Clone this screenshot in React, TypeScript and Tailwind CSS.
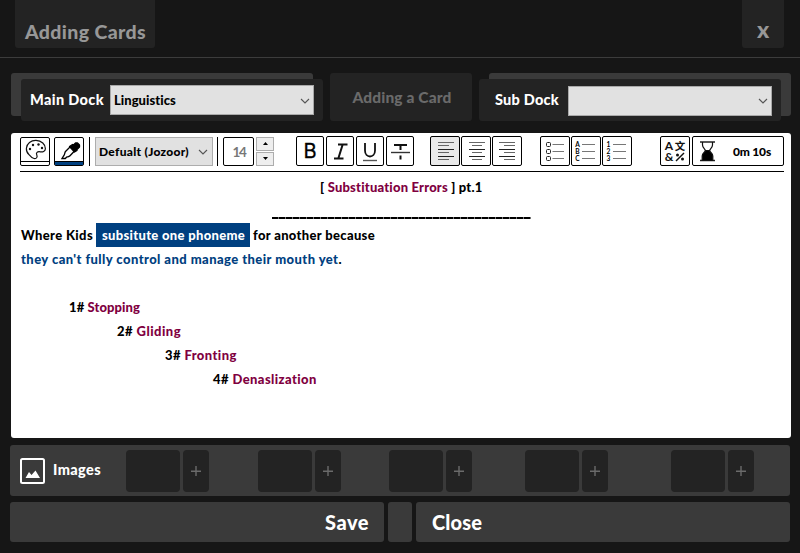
import { useLayoutEffect, useRef, type ReactNode } from "react";

/** Text run tracked so that it spans exactly `w` pixels. */
function Fit({ w, className = "", children }: { w: number; className?: string; children: ReactNode }) {
  const ref = useRef<HTMLSpanElement>(null);
  useLayoutEffect(() => {
    const el = ref.current;
    if (!el) return;
    el.style.letterSpacing = "0px";
    const n = (el.textContent ?? "").length;
    const natural = el.getBoundingClientRect().width;
    el.style.letterSpacing = `${(w - natural) / n}px`;
  }, [w]);
  return (
    <span ref={ref} className={`inline-block shrink-0 whitespace-pre ${className}`}>
      {children}
    </span>
  );
}

function Chevron() {
  return (
    <svg width="10" height="6" viewBox="0 0 10 6" fill="none" stroke="#555" strokeWidth="1.1">
      <path d="M1 1l4 4 4-4" />
    </svg>
  );
}

function Tool({ className = "", children }: { className?: string; children?: ReactNode }) {
  return (
    <button className={`flex h-[30px] shrink-0 items-center justify-center rounded-[2px] border border-black ${className}`}>
      {children}
    </button>
  );
}

function Align({ xs }: { xs: number[][] }) {
  return (
    <svg width="28" height="28" viewBox="0 0 28 28" strokeWidth="1">
      {xs.map(([a, b], i) => (
        <path key={i} d={`M${a} ${[5.5, 8.5, 12.5, 15.5, 19.5, 22.5][i]}H${b}`} stroke={i % 2 || i === 0 ? "#666" : "#222"} />
      ))}
    </svg>
  );
}

function Listing({ marks }: { marks: string[] }) {
  return (
    <svg width="28" height="28" viewBox="0 0 28 28">
      {[7, 14, 21].map((y, i) => (
        <g key={i}>
          {marks.length ? (
            <text x="5.5" y={y + 2.5} textAnchor="middle" className="font-['Lato'] text-[6.6px] leading-none font-bold">
              {marks[i]}
            </text>
          ) : (
            <rect x="5.5" y={y - 1.5} width="4" height="4" rx="1" fill="none" stroke="#222" />
          )}
          <path d={`M${marks.length ? 10 : 11.5} ${y + 0.5}H23`} stroke="#777" />
        </g>
      ))}
    </svg>
  );
}

function Slot({ className = "" }: { className?: string }) {
  return (
    <div className={`flex h-[42px] shrink-0 gap-[3px] ${className}`}>
      <div className="w-[54px] rounded-[4px] bg-[#232323]" />
      <button className="flex w-[26px] items-center justify-center rounded-[4px] bg-[#232323]">
        <svg width="10" height="10" viewBox="0 0 10 10" stroke="#6b6b6b" strokeWidth="1.4">
          <path d="M0 5.2h10M5 0v10" />
        </svg>
      </button>
    </div>
  );
}

export default function App() {
  return (
    <div className="flex h-[553px] w-[800px] flex-col overflow-hidden bg-[#161616] font-['Lato','Liberation_Sans',sans-serif] font-black text-white">
      <header className="flex h-[58px] shrink-0 items-start justify-between border-b border-[#3c3c3c] pr-4 pl-[15px]">
        <div className="h-12 w-[140px] rounded-b-[3px] bg-[#232323] pt-[20px] pl-[10px] text-[19.5px] leading-6 text-[#979797]">
          <Fit w={121}>Adding Cards</Fit>
        </div>
        <button className="flex h-12 w-[42px] items-start justify-center rounded-b-[3px] bg-[#232323] pt-[17px] text-[23px] leading-6 text-[#979797]">x</button>
      </header>

      <section className="mt-[15px] flex h-12 shrink-0 pl-[11px]">
        <div className="h-[43px] w-[302px] shrink-0 rounded-[3px] bg-[#3a3a3a] pt-[6px] pl-[10px]">
          <div className="flex h-[42px] w-[302px] items-center rounded-[3px] bg-[#232323] pl-[9px]">
            <Fit w={74} className="mr-[6px] text-[14.5px]">Main Dock</Fit>
            <div className="flex h-[30px] w-[204px] shrink-0 items-center justify-between border border-[#a9a9a9] bg-[#e1e1e1] pt-px pr-[3px] pl-[3px] text-[13px] text-black">
              <Fit w={62}>Linguistics</Fit>
              <Chevron />
            </div>
          </div>
        </div>
        <div className="ml-[17px] flex h-12 w-[142px] shrink-0 items-center justify-center rounded-[3px] bg-[#232323] pt-[2px] pl-[2px] text-[15.5px] text-[#6a6a6a]">
          <Fit w={99}>Adding a Card</Fit>
        </div>
        <div className="ml-[17px] h-[43px] w-[302px] shrink-0 rounded-[3px] bg-[#3a3a3a] pt-[6px]">
          <div className="-ml-[10px] flex h-[42px] w-[302px] items-center rounded-[3px] bg-[#232323] pl-4">
            <Fit w={64} className="mr-[9px] text-[14.5px]">Sub Dock</Fit>
            <div className="mt-[2px] flex h-[30px] w-[204px] shrink-0 items-center justify-end border border-[#a9a9a9] bg-[#e1e1e1] pr-[3px]">
              <Chevron />
            </div>
          </div>
        </div>
      </section>

      <main className="mt-3 ml-[11px] h-[305px] w-[780px] shrink-0 rounded-[3px] bg-white text-black">
        <div className="ml-[9px] flex h-[39px] w-[764px] items-start border-b border-black pt-[3px]">
          <button className="mt-px flex h-[29px] w-[30px] shrink-0 flex-col rounded-[2px] border border-black">
            <svg width="28" height="23" viewBox="0 0 28 23" fill="none" stroke="#111" strokeWidth="1.2">
              <path d="M8 16.7C6 14.7 5.2 12.6 5.4 10.2C5.8 5.4 10 2.3 15 2.4C20.500 2.500 24.500 6.300 24.400 10.700C24.300 13.500 21.500 14.300 19.300 13.800C16.300 13.200 14.700 14.900 15.800 17C16.700 19.200 15.500 21 13 20.500C11 20.100 9.300 18.300 8 16.700Z" />
              <g fill="#111" stroke="none">
                <circle cx="9" cy="11" r="1.2" />
                <circle cx="12" cy="7" r="1.2" />
                <circle cx="17.500" cy="6.500" r="1.200" />
                <circle cx="21" cy="10" r="1.200" />
              </g>
            </svg>
            <div className="h-1 w-full border-t border-black" />
          </button>
          <button className="mt-px ml-1 flex h-[29px] w-[30px] shrink-0 flex-col rounded-[2px] border border-black">
            <svg width="28" height="23" viewBox="0 0 28 23" fill="none" stroke="#000" strokeWidth="1.3">
              <path d="M15 9L10.500 13.500C9.500 14.700 10.200 16 8.600 18L7 20.500H10.300L11.500 19.200C13 19 14 18.800 15 17.700L19.500 13" />
              <path d="M14.500 8.500L17.500 6.500L18.500 7L20.500 5H22.500L24.500 7V9L22 11.500V12.500L19.500 14Z" fill="#000" strokeLinejoin="round" />
            </svg>
            <div className="h-1 w-full border-t border-black bg-[#004080]" />
          </button>
          <div className="mt-px ml-[5px] h-[29px] w-px shrink-0 bg-black" />
          <div className="mt-px ml-[5px] flex h-[29px] w-[118px] shrink-0 items-center justify-between border border-[#adadad] bg-[#e1e1e1] pr-1 pl-[3px] text-[12px]">
            <Fit w={90}>Defualt (Jozoor)</Fit>
            <Chevron />
          </div>
          <div className="mt-px ml-1 h-[29px] w-px shrink-0 bg-black" />
          <div className="mt-px ml-[5px] flex h-[29px] w-[31px] shrink-0 items-center justify-center rounded-[2px] border border-black pt-px pl-px text-[13.5px] font-bold text-[#777]">
            <Fit w={13}>14</Fit>
          </div>
          <div className="mt-px ml-[2px] flex w-[18px] shrink-0 flex-col gap-px">
            <button className="flex h-[14px] items-center justify-center border border-[#adadad] bg-[#eee] pb-px">
              <svg width="5" height="3" viewBox="0 0 5 3"><path d="M0 3L2.500 0L5 3Z" /></svg>
            </button>
            <button className="flex h-[14px] items-center justify-center border border-[#adadad] bg-[#eee] pb-px">
              <svg width="5" height="3" viewBox="0 0 5 3"><path d="M0 0L2.500 3L5 0Z" /></svg>
            </button>
          </div>

          <div className="ml-[22px] flex gap-[2px]">
            <Tool className="w-7 font-['Inter'] text-[20px] leading-none font-normal [-webkit-text-stroke:0.3px_#000]">B</Tool>
            <Tool className="w-7">
              <svg width="26" height="28" viewBox="0 0 26 28" fill="none" stroke="#111" strokeWidth="2">
                <path d="M11 7.500H20.500M7 21.500H16.500M15.700 7.500L11.300 21.500" />
              </svg>
            </Tool>
            <Tool className="w-7">
              <svg width="26" height="28" viewBox="0 0 26 28" fill="none" stroke="#111" strokeWidth="1.8">
                <path d="M8 6V13.500C8 21.500 18 21.500 18 13.500V6" />
                <path d="M6 23.500H20" stroke="#555" strokeWidth="1.400" />
              </svg>
            </Tool>
            <Tool className="w-7">
              <svg width="26" height="28" viewBox="0 0 26 28" fill="none" stroke="#111" strokeWidth="2">
                <path d="M7 8H20M13.500 8V13M13.500 18.500V22.500" />
                <path d="M4 15.500H23" stroke="#333" strokeWidth="1.400" />
              </svg>
            </Tool>
          </div>

          <div className="ml-4 flex gap-px">
            <Tool className="w-[30px] bg-[#e9e9e9]"><Align xs={[[7, 23], [7, 18], [7, 23], [7, 18], [7, 23], [7, 18]]} /></Tool>
            <Tool className="w-[30px]"><Align xs={[[7, 23], [10, 20], [7, 23], [10, 20], [7, 23], [10, 20]]} /></Tool>
            <Tool className="w-[30px]"><Align xs={[[6, 22], [11, 22], [6, 22], [11, 22], [6, 22], [11, 22]]} /></Tool>
          </div>

          <div className="ml-[18px] flex gap-px">
            <Tool className="w-[30px]"><Listing marks={[]} /></Tool>
            <Tool className="w-[30px]"><Listing marks={["A", "B", "C"]} /></Tool>
            <Tool className="w-[30px]"><Listing marks={["1", "2", "3"]} /></Tool>
          </div>

          <div className="ml-7 flex gap-[2px]">
            <Tool className="w-[30px]">
              <svg width="28" height="28" viewBox="0 0 28 28" fill="none" stroke="#111" strokeWidth="1.4">
                <text x="8" y="13" textAnchor="middle" fill="#111" stroke="none" className="font-['Lato'] text-[12px] font-bold">A</text>
                <text x="8" y="24" textAnchor="middle" fill="#111" stroke="none" className="font-['Lato'] text-[12px] font-bold">&amp;</text>
                <text x="19" y="13" textAnchor="middle" fill="#111" stroke="none" className="font-['Noto_Sans_CJK_SC',sans-serif] text-[10.5px] font-bold">文</text>
                <path d="M15 24L23 16" />
                <circle cx="16.500" cy="18" r="0.800" />
                <circle cx="21.500" cy="22" r="0.800" />
              </svg>
            </Tool>
            <Tool className="w-[92px] justify-start!">
              <svg width="30" height="28" viewBox="0 0 30 28" fill="none" stroke="#111" strokeWidth="1.2" className="shrink-0">
                <path d="M7 5H22M7 23.500H22" stroke="#222" strokeWidth="1.600" />
                <path d="M9.500 5V8C9.500 11 12.500 12 12.500 14M19.500 5V8C19.500 11 16.500 12 16.500 14" />
                <path d="M12.500 13.500H16.500C17 15.500 19.800 16 19.800 19V23.500H9.200V19C9.200 16 12 15.500 12.500 13.500Z" fill="#000" />
              </svg>
              <Fit w={38} className="mt-px ml-[10px] text-[12px]">0m 10s</Fit>
            </Tool>
          </div>
        </div>

        <article className="mt-[3px] pl-[10px] text-[13px] leading-6 [&>p]:h-6">
          <p className="pl-[299px]"><Fit w={163}>[ <span className="text-[#80003f]">Substituation Errors</span> ] pt.1</Fit></p>
          <p className="flex pl-[251px]"><span className="mt-[18px] h-[2px] w-[259px] bg-[repeating-linear-gradient(90deg,#000_0px,#000_6px,#777_6px,#777_7px)]" /></p>
          <p className="flex">
            <Fit w={72}>Where Kids</Fit>
            <span className="ml-[3px] w-[154px] bg-[#004080] pl-[6px] text-white"><Fit w={143}>subsitute one phoneme</Fit></span>
            <Fit w={122} className="ml-[3px]">for another because</Fit>
          </p>
          <p className="text-[#004080]"><Fit w={321}>they can't fully control and manage their mouth yet<span className="text-black">.</span></Fit></p>
          <p />
          <p className="pl-12"><Fit w={71}>1# <span className="text-[#80003f]">Stopping</span></Fit></p>
          <p className="pl-24"><Fit w={64}>2# <span className="text-[#80003f]">Gliding</span></Fit></p>
          <p className="pl-36"><Fit w={72}>3# <span className="text-[#80003f]">Fronting</span></Fit></p>
          <p className="pl-48"><Fit w={104}>4# <span className="text-[#80003f]">Denaslization</span></Fit></p>
        </article>
      </main>

      <section className="mt-[7px] ml-[10px] flex h-[51px] w-[780px] shrink-0 items-start rounded-[3px] bg-[#3a3a3a] pt-[5px] pl-[10px]">
        <svg width="25" height="26" viewBox="0 0 25 26" className="mt-[8px] shrink-0">
          <rect x="1" y="1" width="23" height="24" rx="1.500" fill="none" stroke="#fff" strokeWidth="2" />
          <path d="M5.500 20L9 14L11.500 17L15.500 12.500L20 20Z" fill="#fff" />
        </svg>
        <Fit w={48} className="mt-[10px] ml-2 text-[14.5px] leading-5">Images</Fit>
        <Slot className="ml-[25px]" />
        <Slot className="ml-[49px]" />
        <Slot className="ml-[48px]" />
        <Slot className="ml-[53px]" />
        <Slot className="ml-[63px]" />
      </section>

      <footer className="mt-[6px] ml-[10px] flex h-10 shrink-0 gap-1 text-[20px]">
        <button className="w-[374px] rounded-[3px] bg-[#3a3a3a] pr-[15px] text-right"><Fit w={44}>Save</Fit></button>
        <div className="w-6 rounded-[3px] bg-[#3a3a3a]" />
        <button className="w-[374px] rounded-[3px] bg-[#3a3a3a] pl-4 text-left"><Fit w={50}>Close</Fit></button>
      </footer>
    </div>
  );
}
